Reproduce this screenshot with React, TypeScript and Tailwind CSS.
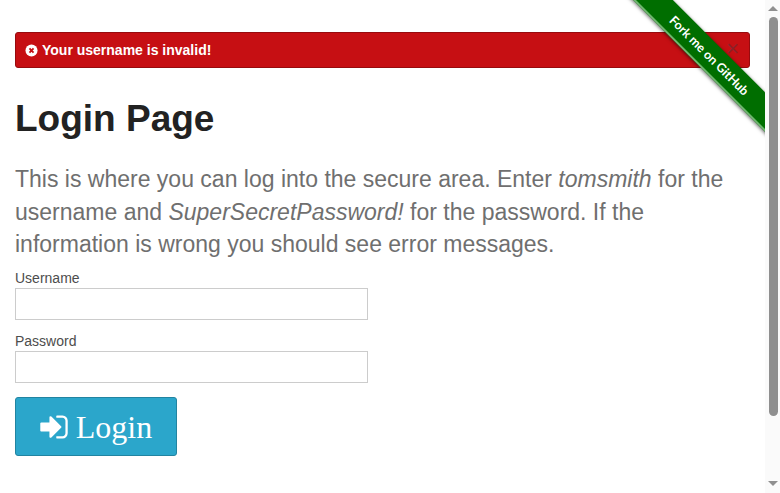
const SANS = 'font-["Liberation_Sans",Arial,sans-serif]';

function SignInIcon() {
  return (
    <svg viewBox="0 0 1536 1792" className="h-[32px] w-[28px] fill-current">
      <path d="M1184 896q0 26-19 45l-544 544q-19 19-45 19t-45-19-19-45v-288h-448q-26 0-45-19t-19-45v-384q0-26 19-45t45-19h448v-288q0-26 19-45t45-19 45 19l544 544q19 19 19 45zm352-352v704q0 119-84.500 203.500t-203.500 84.500h-320q-13 0-22.500-9.500t-9.500-22.500q0-4-1-20t-.5-26.500 3-23.500 10-19.500 20.500-6.500h320q66 0 113-47t47-113v-704q0-66-47-113t-113-47h-312l-11.500-1-11.500-3-8-5.500-7-9-2-13.500q0-4-1-20t-.5-26.500 3-23.500 10-19.500 20.500-6.500h320q119 0 203.500 84.500t84.500 203.500z" />
    </svg>
  );
}

function Ribbon() {
  return (
    <div className="absolute left-0 top-0 h-[160px] w-[765px] overflow-hidden pointer-events-none">
      <div className="absolute left-[560px] top-[43px] flex h-[28px] w-[300px] rotate-45 items-center justify-center border-b-2 border-solid border-[#6fb56f] bg-[#006e00] pt-[2px] pr-[3px] font-['Lato',sans-serif] text-[12.5px] font-bold text-white shadow-[0_1px_4px_rgba(0,0,0,0.6)]">
        Fork me on GitHub
      </div>
    </div>
  );
}

function Scrollbar() {
  return (
    <div className="flex h-full w-[15px] shrink-0 flex-col items-center bg-[#fafafa] pl-[1px]">
      <div className="mb-[6px] mt-[6px] h-0 w-0 border-x-[5px] border-b-[5px] border-x-transparent border-b-[#8f8f8f]" />
      <div className="h-[399px] w-[9px] rounded-full bg-[#8f8f8f]" />
      <div className="mt-auto mb-[7px] h-0 w-0 border-x-[5px] border-t-[5px] border-x-transparent border-t-[#8f8f8f]" />
    </div>
  );
}

export default function App() {
  return (
    <div className={`relative flex h-[493px] w-[780px] overflow-hidden bg-white ${SANS}`}>
      <main className="min-w-0 flex-1 px-[15px] pt-[32px]">
        <div className="relative flex h-[36px] w-[735px] items-center gap-[4px] rounded-[3px] border border-[#970b0e] bg-[#c60f13] pl-[9px] text-[14px] font-bold text-white">
          <svg viewBox="0 0 14 14" className="h-[13px] w-[13px]">
            <circle cx="7" cy="7" r="6.5" fill="#fff" />
            <path d="M4.8 4.8l4.4 4.4M9.2 4.8l-4.4 4.4" stroke="#c60f13" strokeWidth="2" />
          </svg>
          Your username is invalid!
          <span className="absolute right-[10px] top-[3px] text-[22px] leading-[26px] font-normal text-[#8d2128]">×</span>
        </div>

        <h1 className="mt-[28px] text-[37px] font-bold leading-[46px] text-[#222222]">Login Page</h1>

        <p className="mt-[21px] text-[23px] leading-[32.5px] text-[#6f6f6f]">
          This is where you can log into the secure area. Enter <em>tomsmith</em> for the username and{' '}
          <em>SuperSecretPassword!</em> for the password. If the information is wrong you should see error messages.
        </p>

        <form className="mt-[9px] w-[353px]">
          <label className="block text-[14px] leading-[17px] text-[#4d4d4d]">Username</label>
          <input type="text" className="mt-[1px] block h-[32px] w-full border border-[#cccccc] bg-white" />
          <label className="mt-[13px] block text-[14px] leading-[17px] text-[#4d4d4d]">Password</label>
          <input type="password" className="mt-[1px] block h-[32px] w-full border border-[#cccccc] bg-white" />
          <button
            type="button"
            className="mt-[14px] flex h-[59px] w-[162px] items-center justify-center gap-[8px] rounded-[3px] border border-[#2284a1] bg-[#2ba6cb] pt-[1px] font-['Liberation_Serif',serif] text-[32px] text-white"
          >
            <SignInIcon />
            Login
          </button>
        </form>
      </main>
      <Scrollbar />
      <Ribbon />
    </div>
  );
}
